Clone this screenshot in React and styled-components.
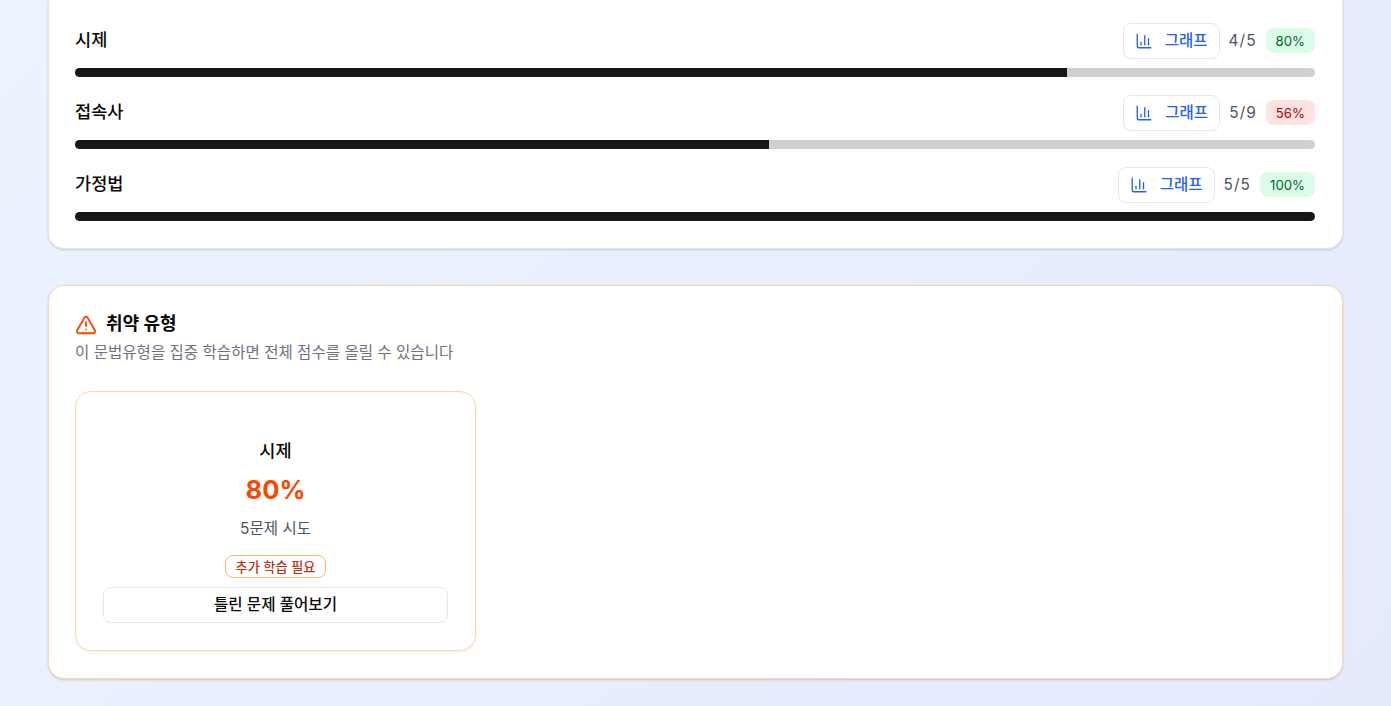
import React from "react";
import styled, { createGlobalStyle } from "styled-components";
import { ChartColumn, TriangleAlert } from "lucide-react";

const Global = createGlobalStyle`
  html, body { margin: 0; padding: 0; }
  body {
    height: 706px;
    overflow: hidden;
    background: linear-gradient(135deg, #ecf3ff 0%, #e5eafd 100%);
    font-family: Inter, "Noto Sans CJK KR", sans-serif;
    color: #0a0a0a;
  }
`;

const Page = styled.div`
  box-sizing: border-box;
  height: 706px;
  padding: 0 48px 0 47.5px;
  display: flex;
  flex-direction: column;
  gap: 36px;
`;

const Card = styled.section`
  background: #fff;
  border: 1px solid ${(p) => (p.$warn ? "#ffd6a8" : "#e5e7eb")};
  border-top: ${(p) => (p.$warn ? "1px solid #ffd6a8" : "none")};
  border-radius: ${(p) => (p.$warn ? "16px" : "0 0 16px 16px")};
  box-shadow: 0 1px 3px rgba(0, 0, 0, 0.1), 0 1px 2px rgba(0, 0, 0, 0.06);
  padding: ${(p) => (p.$warn ? "27.5px 27px 27px 26.5px" : "23px 27px 27px 26.5px")};
`;

const List = styled.div`
  display: flex;
  flex-direction: column;
  gap: 18px;
`;

const Row = styled.div`
  display: flex;
  flex-direction: column;
  gap: 9px;
`;

const RowHead = styled.div`
  display: flex;
  justify-content: space-between;
  align-items: center;
  height: 36px;
`;

const Name = styled.span`
  font-size: 17.6px;
  font-weight: 500;
  line-height: 34px;
  margin-top: -2px;
`;

const Right = styled.div`
  display: flex;
  align-items: center;
  gap: 9px;
`;

const GraphButton = styled.button`
  box-sizing: border-box;
  width: 97px;
  height: 36px;
  display: flex;
  align-items: center;
  justify-content: center;
  gap: 12px;
  background: #fff;
  border: 1px solid #e5e7eb;
  border-radius: 8px;
  color: #2563eb;
  font: 500 15.5px Inter, "Noto Sans CJK KR", sans-serif;
  padding: 0;
`;

const GraphLabel = styled.span`
  margin-top: -5px;
`;

const Count = styled.span`
  font-size: 15.4px;
  color: #4a5565;
  letter-spacing: 1.05px;
  margin-top: -2px;
`;

const Pct = styled.span`
  display: inline-flex;
  align-items: center;
  height: 25px;
  padding: 0 10px;
  margin-top: -1px;
  border-radius: 8px;
  font-size: 13.2px;
  font-weight: 400;
  background: ${(p) => (p.$low ? "#ffe2e2" : "#dcfce7")};
  color: ${(p) => (p.$low ? "#9f0712" : "#016630")};
`;

const Track = styled.div`
  height: 9px;
  border-radius: 999px;
  background: #cfcfcf;
  overflow: hidden;
`;

const Fill = styled.div`
  height: 100%;
  background: #171717;
`;

const Title = styled.h2`
  margin: 0;
  display: flex;
  align-items: center;
  gap: 9px;
  font-size: 18px;
  font-weight: 700;
  line-height: 24px;
  color: #0a0a0a;
`;

const TitleText = styled.span`
  margin-top: -2px;
`;

const Sub = styled.p`
  margin: 6px 0 27px;
  font-size: 15.55px;
  line-height: 22px;
  color: #717182;
`;

const Weak = styled.div`
  box-sizing: border-box;
  width: 401px;
  height: 260px;
  padding: 47px 27px 27px;
  border: 1px solid #ffd6a8;
  border-radius: 16px;
  box-shadow: 0 1px 3px rgba(0, 0, 0, 0.08);
  display: flex;
  flex-direction: column;
  align-items: center;
`;

const WeakName = styled.div`
  font-size: 17.6px;
  font-weight: 500;
  line-height: 24px;
`;

const WeakPct = styled.div`
  margin-top: 9px;
  font-size: 25.6px;
  font-weight: 700;
  line-height: 36px;
  color: #f54900;
`;

const Tries = styled.div`
  margin-top: 10px;
  font-size: 15.5px;
  line-height: 22px;
  color: #4a5565;
`;

const Tag = styled.span`
  box-sizing: border-box;
  margin-top: 15px;
  height: 24px;
  display: inline-flex;
  align-items: center;
  padding: 0 10px;
  border: 1px solid #ffb86a;
  border-radius: 8px;
  font-size: 13.2px;
  font-weight: 500;
  color: #b93815;
`;

const Retry = styled.button`
  box-sizing: border-box;
  margin-top: 9px;
  width: 100%;
  height: 36px;
  padding: 0 0 4px;
  background: #fff;
  border: 1px solid #e5e7eb;
  border-radius: 8px;
  font: 500 15.6px Inter, "Noto Sans CJK KR", sans-serif;
  color: #0a0a0a;
`;

const rows = [
  { name: "시제", count: "4/5", pct: 80 },
  { name: "접속사", count: "5/9", pct: 56, low: true },
  { name: "가정법", count: "5/5", pct: 100 },
];

export default function App() {
  return (
    <Page>
      <Global />
      <Card>
        <List>
          {rows.map((r) => (
            <Row key={r.name}>
              <RowHead>
                <Name>{r.name}</Name>
                <Right>
                  <GraphButton>
                    <ChartColumn size={18} strokeWidth={1.8} />
                    <GraphLabel>그래프</GraphLabel>
                  </GraphButton>
                  <Count>{r.count}</Count>
                  <Pct $low={r.low}>{r.pct}%</Pct>
                </Right>
              </RowHead>
              <Track>
                <Fill style={{ width: `${r.pct}%` }} />
              </Track>
            </Row>
          ))}
        </List>
      </Card>
      <Card $warn>
        <Title>
          <TriangleAlert size={22} color="#f54900" />
          <TitleText>취약 유형</TitleText>
        </Title>
        <Sub>이 문법유형을 집중 학습하면 전체 점수를 올릴 수 있습니다</Sub>
        <Weak>
          <WeakName>시제</WeakName>
          <WeakPct>80%</WeakPct>
          <Tries>5문제 시도</Tries>
          <Tag>추가 학습 필요</Tag>
          <Retry>틀린 문제 풀어보기</Retry>
        </Weak>
      </Card>
    </Page>
  );
}
